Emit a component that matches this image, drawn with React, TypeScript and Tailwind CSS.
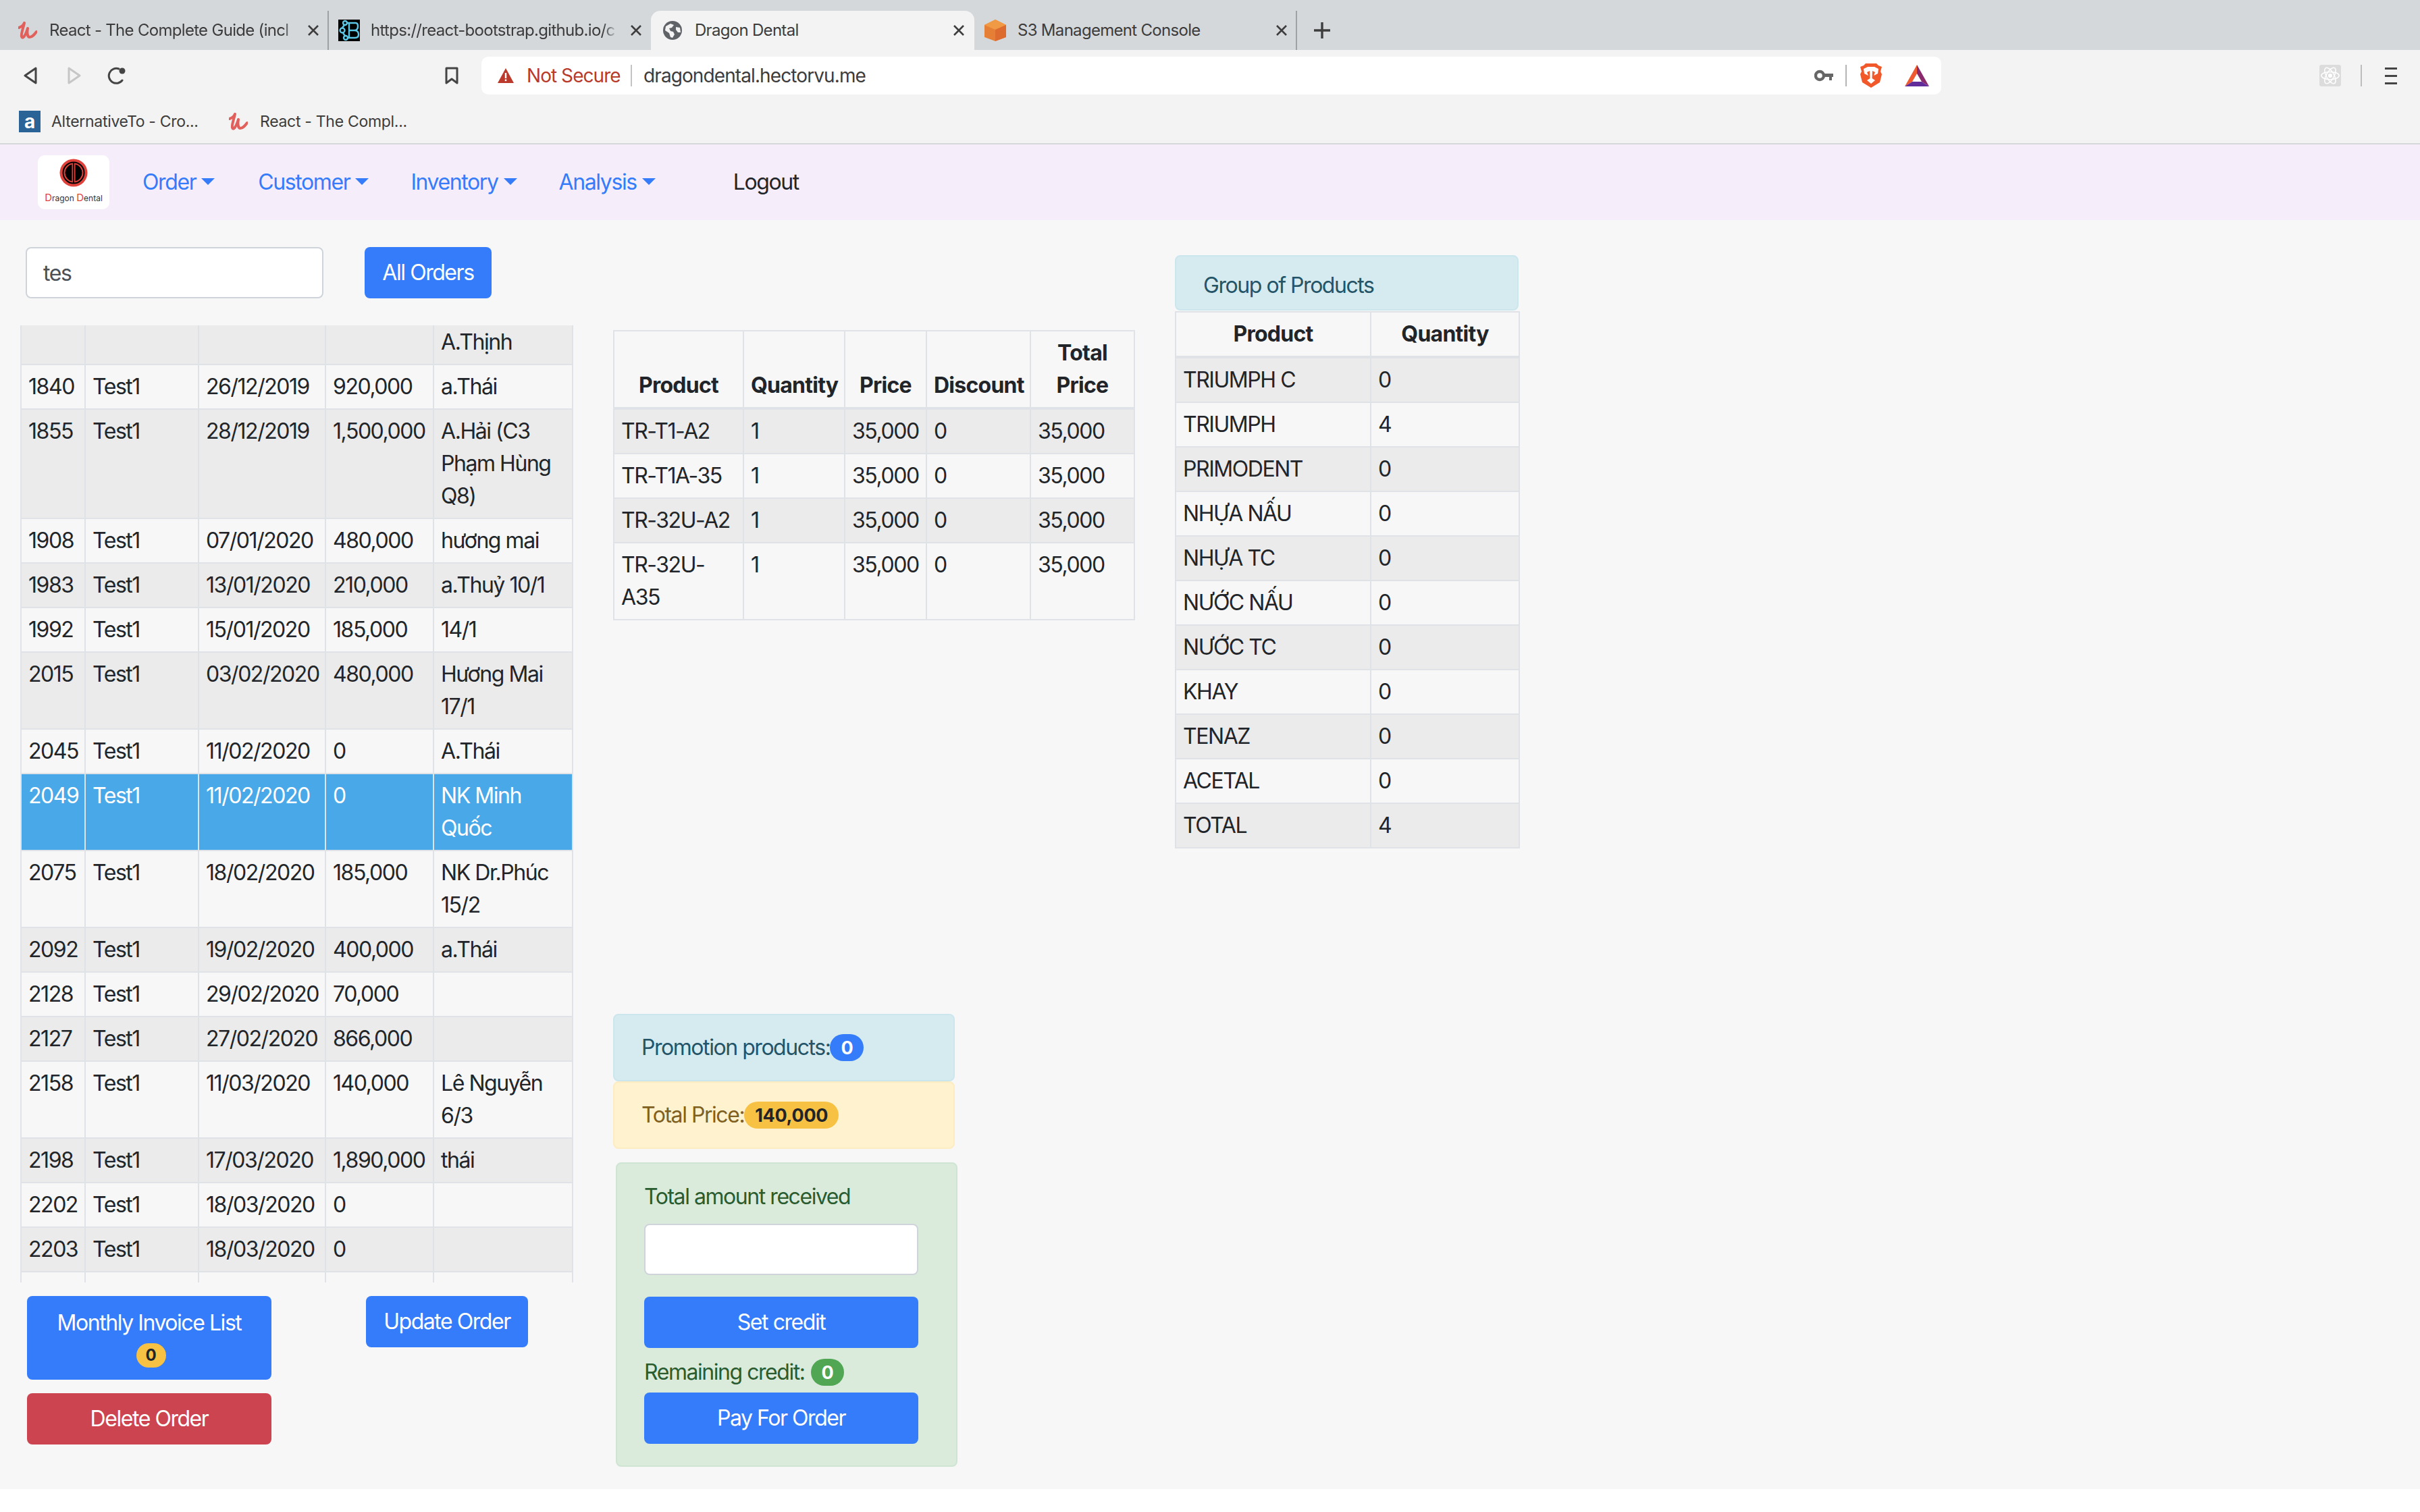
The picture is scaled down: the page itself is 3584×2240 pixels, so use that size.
import React from "react";

const UFav = ({ cls = "" }: { cls?: string }) => (
  <svg viewBox="0 0 28 28" className={`w-[28px] h-[28px] shrink-0 ${cls}`} fill="none">
    <path d="M1 10 C4 9 8 6 9 3 C8 9 4 18 5 23 C6 27 10 24 14 11 C13 16 13 24 17 24 C21 24 24 20 27 16" stroke="#e2605b" strokeWidth="4" strokeLinecap="round" strokeLinejoin="round" />
  </svg>
);
const RbFav = () => (
  <svg viewBox="0 0 32 32" className="w-[32px] h-[32px] shrink-0">
    <rect width="32" height="32" fill="#000" />
    <g fill="none" stroke="#5cc8e6" strokeWidth="2.4">
      <circle cx="10" cy="5" r="3" />
      <circle cx="6" cy="16" r="3.5" />
      <circle cx="11" cy="27" r="3" />
      <path d="M13 5 H26 Q29 5 29 10 Q29 15 25 16 Q30 17 30 22 Q30 27 25 27 H14" />
      <path d="M16 5 V27 M16 16 H25" />
      <path d="M9 8 L6 12 M7 20 L10 24" />
    </g>
  </svg>
);
const GlobeFav = () => (
  <svg viewBox="0 0 28 28" className="w-[28px] h-[28px] shrink-0">
    <circle cx="14" cy="14" r="14" fill="#5f6368" />
    <path d="M4 8 L11 4 L16 6 L13 10 L9 11 L11 15 L15 16 L17 20 L14 25 L11 24 L9 18 L3 14 Z M19 9 L25 10 L26 17 L22 17 L19 13 Z" fill="#f3f3f3" />
  </svg>
);
const S3Fav = () => (
  <svg viewBox="0 0 32 32" className="w-[32px] h-[32px] shrink-0">
    <path d="M16 0 L32 8 V26 L16 32 L0 26 V8 Z" fill="#e57f36" />
    <path d="M16 0 L32 8 L16 15 L0 8 Z" fill="#f09a45" />
    <path d="M16 15 L32 8 V26 L16 32 Z" fill="#dd6b2f" />
  </svg>
);
const XIcon = () => (
  <svg viewBox="0 0 16 16" className="w-[16px] h-[16px] shrink-0" fill="none" stroke="#3d3d3d" strokeWidth="2.6">
    <path d="M1 1 L15 15 M15 1 L1 15" />
  </svg>
);

const Tab = ({
  box,
  icon,
  title,
  textBox,
  fade,
  children,
}: {
  box: string;
  icon: React.ReactNode;
  title: string;
  textBox: string;
  fade?: boolean;
  children?: React.ReactNode;
}) => (
  <div className={`flex items-center h-[58px] shrink-0 ${box}`}>
    {icon}
    <span
      className={`whitespace-nowrap overflow-hidden text-[24px] tracking-[-0.7px] text-[#3c3c3c] ${textBox} ${
        fade ? "[mask-image:linear-gradient(to_right,black_94%,transparent)]" : ""
      }`}
    >
      {title}
    </span>
    {children}
    <XIcon />
  </div>
);

const Browser = () => (
  <div className="[font-family:Inter,sans-serif]">
    <div className="flex items-end h-[74px] bg-[#d5d8db]">
      <Tab box="w-[487px] pl-[27px] border-r-2 border-[#9ea1a4]" icon={<UFav />} title="React - The Complete Guide (incl" textBox="ml-[18px] w-[368px]" fade>
        <div className="w-[15px] shrink-0" />
      </Tab>
      <Tab box="w-[477px] pl-[14px]" icon={<RbFav />} title="https://react-bootstrap.github.io/c" textBox="ml-[16px] w-[366px]" fade>
        <div className="w-[19px] shrink-0" />
      </Tab>
      <Tab box="w-[479px] pl-[18px] bg-[#f3f3f3] rounded-t-[14px]" icon={<GlobeFav />} title="Dragon Dental" textBox="ml-[19px] w-[383px]" />
      <Tab box="w-[478px] pl-[15px] border-r-2 border-[#9ea1a4]" icon={<S3Fav />} title="S3 Management Console" textBox="ml-[17px] w-[383px]" />
      <svg viewBox="0 0 24 24" className="w-[24px] h-[24px] ml-[25px] mb-[17px]" fill="none" stroke="#3d3d3d" strokeWidth="3.4">
        <path d="M12 0 V24 M0 12 H24" />
      </svg>
    </div>
    <div className="bg-[#f3f3f3] border-b-2 border-[#d5d8db] pt-[10px] pb-[16px]">
      <div className="flex items-center h-[56px]">
        <svg viewBox="0 0 20 26" className="w-[20px] h-[26px] ml-[35px]" fill="none" stroke="#444" strokeWidth="3" strokeLinejoin="round">
          <path d="M18 2 L2 13 L18 24 Z" />
        </svg>
        <svg viewBox="0 0 20 26" className="w-[20px] h-[26px] ml-[45px]" fill="none" stroke="#c6c6c6" strokeWidth="3" strokeLinejoin="round">
          <path d="M2 2 L18 13 L2 24 Z" />
        </svg>
        <svg viewBox="0 0 28 26" className="w-[28px] h-[26px] ml-[39px]" fill="none">
          <path d="M22 20 A11 11 0 1 1 17 3" stroke="#444" strokeWidth="3" strokeLinecap="round" />
          <circle cx="22" cy="6" r="4.5" fill="#444" />
        </svg>
        <svg viewBox="0 0 20 26" className="w-[20px] h-[26px] ml-[472px]" fill="none" stroke="#444" strokeWidth="3" strokeLinejoin="round">
          <path d="M2 2 H18 V24 L10 18 L2 24 Z" />
        </svg>
        <div className="flex items-center w-[2162px] h-[56px] ml-[34px] pr-[18px] bg-white rounded-[10px]">
          <svg viewBox="0 0 24 22" className="w-[24px] h-[22px] ml-[24px]">
            <path d="M12 0 L24 22 H0 Z" fill="#bc3a2b" />
            <rect x="10.8" y="7" width="2.4" height="8" fill="#fff" />
            <rect x="10.8" y="16.5" width="2.4" height="2.6" fill="#fff" />
          </svg>
          <span className="ml-[19px] w-[140px] text-[28px] tracking-[-0.95px] text-[#b83a2a] whitespace-nowrap">Not Secure</span>
          <div className="w-[2px] h-[32px] bg-[#c4c4c4] ml-[14px]" />
          <span className="ml-[17px] text-[28px] tracking-[-0.9px] text-[#3c3c3c] whitespace-nowrap">dragondental.hectorvu.me</span>
          <svg viewBox="0 0 28 18" className="w-[28px] h-[18px] ml-auto">
            <circle cx="8" cy="9" r="6" fill="none" stroke="#666" strokeWidth="4.4" />
            <path d="M13 6 H28 V11 H26 V16 H22 V11 H13 Z" fill="#666" />
          </svg>
          <div className="w-[2px] h-[32px] bg-[#b5b5b5] ml-[18px]" />
          <svg viewBox="0 0 32 36" className="w-[32px] h-[36px] ml-[20px]">
            <path d="M8 0 H24 L27 3 L32 5 L30 12 L32 16 L29 28 L16 36 L3 28 L0 16 L2 12 L0 5 L5 3 Z" fill="#f1592a" />
            <path d="M5 8 L11 5 H21 L27 8 L26 15 L20 18 L22 13 L18 11 L17.5 22 L22 25 L16 30 L10 25 L14.5 22 L14 11 L10 13 L12 18 L6 15 Z" fill="#fff" />
          </svg>
          <svg viewBox="0 0 36 32" className="w-[36px] h-[32px] ml-[34px]">
            <path d="M18 0 V13 L11 25 L0 32 Z" fill="#ef5a30" />
            <path d="M18 0 L36 32 L25 25 L18 13 Z" fill="#8a2a6c" />
            <path d="M0 32 L11 25 H25 L36 32 Z" fill="#612d9a" />
          </svg>
        </div>
        <div className="flex items-center justify-center w-[32px] h-[32px] ml-[560px] bg-[#dcdcdc] rounded-[3px]">
          <svg viewBox="0 0 32 32" className="w-[30px] h-[30px]" fill="none" stroke="#fff" strokeWidth="1.6">
            <ellipse cx="16" cy="16" rx="14" ry="6" transform="rotate(60 16 16)" />
            <ellipse cx="16" cy="16" rx="14" ry="6" transform="rotate(120 16 16)" />
            <ellipse cx="16" cy="16" rx="14" ry="6" />
            <circle cx="16" cy="16" r="2.5" fill="#fff" />
          </svg>
        </div>
        <div className="w-[2px] h-[32px] bg-[#bdbdbd] ml-[29px]" />
        <div className="flex flex-col gap-[8px] ml-[34px]">
          <div className="w-[18px] h-[3px] bg-[#444]" />
          <div className="w-[18px] h-[3px] bg-[#444]" />
          <div className="w-[18px] h-[3px] bg-[#444]" />
        </div>
      </div>
      <div className="flex items-center h-[32px] mt-[24px] text-[23px] tracking-[-0.3px] text-[#3c3c3c]">
        <div className="flex items-center justify-center w-[32px] h-[32px] ml-[28px] bg-[#2a6496] text-white font-bold text-[28px] leading-none">a</div>
        <span className="ml-[16px] whitespace-nowrap w-[263px]">AlternativeTo - Cro...</span>
        <UFav />
        <span className="ml-[18px] whitespace-nowrap">React - The Compl...</span>
      </div>
    </div>
  </div>
);

const Logo = () => (
  <div className="flex flex-col items-center w-[106px] h-[80px] bg-white rounded-[10px] pt-[5px]">
    <svg viewBox="0 0 42 42" className="w-[42px] h-[42px] shrink-0">
      <circle cx="21" cy="21" r="20.5" fill="#e0423b" />
      <circle cx="21" cy="21" r="15.5" fill="none" stroke="#000" strokeWidth="2" />
      <path d="M18.5 8.5 V33.5 A12.8 12.8 0 0 1 18.5 8.5 Z" fill="#000" />
      <path d="M23.5 8.5 V33.5 A12.8 12.8 0 0 0 23.5 8.5 Z" fill="#000" />
      <rect x="20.2" y="5.5" width="1.6" height="31" fill="#000" />
    </svg>
    <span className="mt-[8px] text-[12px] leading-[16px] tracking-normal text-[#333] whitespace-nowrap">
      <span className="text-[#e0423b] text-[15px]">D</span>ragon <span className="text-[#e0423b] text-[15px]">D</span>ental
    </span>
  </div>
);

const NavLink = ({ label, ml }: { label: string; ml: string }) => (
  <div className={`flex items-center text-[#347cf9] ${ml}`}>
    <span>{label}</span>
    <div className="w-0 h-0 ml-[8px] mb-[2px] border-x-[10px] border-t-[10px] border-x-transparent border-t-[#347cf9]" />
  </div>
);

const Nav = () => (
  <div className="flex items-center h-[112px] bg-[#f5eefa] text-[32px] leading-[48px] tracking-[-1.4px]">
    <div className="ml-[56px]">
      <Logo />
    </div>
    <NavLink label="Order" ml="ml-[49px]" />
    <NavLink label="Customer" ml="ml-[64px]" />
    <NavLink label="Inventory" ml="ml-[62px]" />
    <NavLink label="Analysis" ml="ml-[62px]" />
    <span className="ml-[115px] text-[#212529]">Logout</span>
  </div>
);

const orders: [string, string, string, string, string, string?][] = [
  ["", "", "", "", "A.Thịnh"],
  ["1840", "Test1", "26/12/2019", "920,000", "a.Thái"],
  ["1855", "Test1", "28/12/2019", "1,500,000", "A.Hải (C3 Phạm Hùng Q8)"],
  ["1908", "Test1", "07/01/2020", "480,000", "hương mai"],
  ["1983", "Test1", "13/01/2020", "210,000", "a.Thuỷ 10/1"],
  ["1992", "Test1", "15/01/2020", "185,000", "14/1"],
  ["2015", "Test1", "03/02/2020", "480,000", "Hương Mai 17/1"],
  ["2045", "Test1", "11/02/2020", "0", "A.Thái"],
  ["2049", "Test1", "11/02/2020", "0", "NK Minh Quốc", "sel"],
  ["2075", "Test1", "18/02/2020", "185,000", "NK Dr.Phúc 15/2"],
  ["2092", "Test1", "19/02/2020", "400,000", "a.Thái"],
  ["2128", "Test1", "29/02/2020", "70,000", ""],
  ["2127", "Test1", "27/02/2020", "866,000", ""],
  ["2158", "Test1", "11/03/2020", "140,000", "Lê Nguyễn 6/3"],
  ["2198", "Test1", "17/03/2020", "1,890,000", "thái"],
  ["2202", "Test1", "18/03/2020", "0", ""],
  ["2203", "Test1", "18/03/2020", "0", ""],
  ["\u00a0", "", "", "", ""],
];

const products = [
  ["TR-T1-A2", "1", "35,000", "0", "35,000"],
  ["TR-T1A-35", "1", "35,000", "0", "35,000"],
  ["TR-32U-A2", "1", "35,000", "0", "35,000"],
  ["TR-32U-A35", "1", "35,000", "0", "35,000"],
];

const groups = [
  ["TRIUMPH C", "0"],
  ["TRIUMPH", "4"],
  ["PRIMODENT", "0"],
  ["NHỰA NẤU", "0"],
  ["NHỰA TC", "0"],
  ["NƯỚC NẤU", "0"],
  ["NƯỚC TC", "0"],
  ["KHAY", "0"],
  ["TENAZ", "0"],
  ["ACETAL", "0"],
  ["TOTAL", "4"],
];

const td = "border-2 border-[#dfe2e6] px-[10px] py-[8px] align-top";
const th = "border-2 border-b-[4px] border-[#dfe2e6] px-[10px] py-[8px] align-bottom text-center font-bold tracking-[-0.75px]";

const OrdersTable = () => (
  <div className="h-[1418px] overflow-hidden mt-[40px] w-[820px]">
    <table className="-mt-[9px] table-fixed border-collapse w-[817px]">
      <colgroup>
        <col className="w-[95px]" />
        <col className="w-[168px]" />
        <col className="w-[188px]" />
        <col className="w-[160px]" />
        <col className="w-[206px]" />
      </colgroup>
      <tbody>
        {orders.map((r, i) => (
          <tr key={i} className={r[5] ? "bg-[#48a8e8] text-white" : i % 2 === 0 ? "bg-[#ebebeb]" : ""}>
            {r.slice(0, 5).map((c, j) => (
              <td key={j} className={td}>
                {c}
              </td>
            ))}
          </tr>
        ))}
      </tbody>
    </table>
  </div>
);

const ProductsTable = () => (
  <table className="table-fixed border-collapse w-[771px]">
    <colgroup>
      <col className="w-[192px]" />
      <col className="w-[150px]" />
      <col className="w-[121px]" />
      <col className="w-[154px]" />
      <col className="w-[154px]" />
    </colgroup>
    <thead>
      <tr>
        <th className={th}>Product</th>
        <th className={th}>Quantity</th>
        <th className={th}>Price</th>
        <th className={th}>Discount</th>
        <th className={th}>Total Price</th>
      </tr>
    </thead>
    <tbody>
      {products.map((r, i) => (
        <tr key={i} className={i % 2 === 0 ? "bg-[#ebebeb]" : ""}>
          {r.map((c, j) => (
            <td key={j} className={td}>
              {c}
            </td>
          ))}
        </tr>
      ))}
    </tbody>
  </table>
);

const GroupTable = () => (
  <table className="mt-[1px] table-fixed border-collapse w-[509px]">
    <colgroup>
      <col className="w-[289px]" />
      <col className="w-[220px]" />
    </colgroup>
    <thead>
      <tr>
        <th className={th}>Product</th>
        <th className={th}>Quantity</th>
      </tr>
    </thead>
    <tbody>
      {groups.map((r, i) => (
        <tr key={i} className={i % 2 === 0 ? "bg-[#ebebeb]" : ""}>
          {r.map((c, j) => (
            <td key={j} className={td}>
              {c}
            </td>
          ))}
        </tr>
      ))}
    </tbody>
  </table>
);

const Badge = ({ bg, text, children }: { bg: string; text: string; children: React.ReactNode }) => (
  <span className={`inline-flex items-center justify-center h-[40px] px-[16px] rounded-full text-[27px] tracking-[-0.3px] font-bold leading-none ${bg} ${text}`}>{children}</span>
);

export default function App() {
  return (
    <div className="[font-family:Inter,sans-serif] text-[32px] leading-[48px] tracking-[-1.45px] text-[#212529]">
      <Browser />
      <Nav />
      <div className="flex items-start h-[1880px] bg-[#f7f7f7]">
        <div className="w-[848px] shrink-0 pl-[30px] pt-[40px]">
          <div className="flex">
            <input readOnly value="tes" className="w-[441px] h-[76px] ml-[8px] px-[24px] bg-white border-2 border-[#ced4da] rounded-[8px] text-[#495057]" />
            <button className="ml-[61px] w-[188px] h-[76px] bg-[#347cf9] text-white rounded-[8px]">All Orders</button>
          </div>
          <OrdersTable />
          <div className="flex items-start mt-[20px] ml-[10px]">
            <div className="flex flex-col gap-[20px] w-[362px]">
              <button className="w-[362px] h-[124px] bg-[#347cf9] text-white rounded-[8px] pt-[16px] flex flex-col items-center justify-start">
                <span className="block leading-[48px]">Monthly Invoice List</span>
                <span className="inline-flex items-center justify-center h-[36px] w-[44px] mt-[6px] ml-[5px] rounded-full bg-[#f7c143] text-[#212529] font-bold text-[24px] tracking-normal leading-none">0</span>
              </button>
              <button className="w-[362px] h-[76px] bg-[#cc444f] text-white rounded-[8px]">Delete Order</button>
            </div>
            <button className="ml-[140px] w-[240px] h-[76px] bg-[#347cf9] text-white rounded-[8px]">Update Order</button>
          </div>
        </div>
        <div className="w-[771px] shrink-0 ml-[60px] pt-[163px]">
          <ProductsTable />
          <div className="w-[506px] mt-[583px]">
            <div className="flex items-center h-[100px] px-[40px] bg-[#d6ebf0] border-2 border-[#cbe6ed] rounded-[8px] text-[#245468]">
              Promotion products:
              <Badge bg="bg-[#347cf9]" text="text-white">0</Badge>
            </div>
            <div className="flex items-center h-[100px] px-[40px] bg-[#fff2cf] border-2 border-[#fdecc0] rounded-[8px] text-[#806020]">
              Total Price:
              <Badge bg="bg-[#f7c143]" text="text-[#212529]">140,000</Badge>
            </div>
          </div>
          <div className="w-[506px] h-[451px] mt-[20px] ml-[4px] px-[40px] pt-[25px] bg-[#daebdc] border-2 border-[#cfe4d2] rounded-[8px] text-[#2a5c30]">
            <div>Total amount received</div>
            <input readOnly className="block w-[406px] h-[76px] mt-[16px] bg-white border-2 border-[#ced4da] rounded-[8px]" />
            <button className="block w-[406px] h-[76px] mt-[32px] bg-[#347cf9] text-white rounded-[8px]">Set credit</button>
            <div className="flex items-center gap-[9px] mt-[16px] h-[40px]">
              Remaining credit:
              <Badge bg="bg-[#51a654]" text="text-white">0</Badge>
            </div>
            <button className="block w-[406px] h-[76px] mt-[10px] bg-[#347cf9] text-white rounded-[8px]">Pay For Order</button>
          </div>
        </div>
        <div className="w-[509px] shrink-0 ml-[61px] pt-[52px]">
          <div className="h-[82px] pl-[40px] pt-[19px] bg-[#d6ebf0] border-2 border-[#cbe6ed] rounded-[8px] text-[#245468]">Group of Products</div>
          <GroupTable />
        </div>
      </div>
    </div>
  );
}
